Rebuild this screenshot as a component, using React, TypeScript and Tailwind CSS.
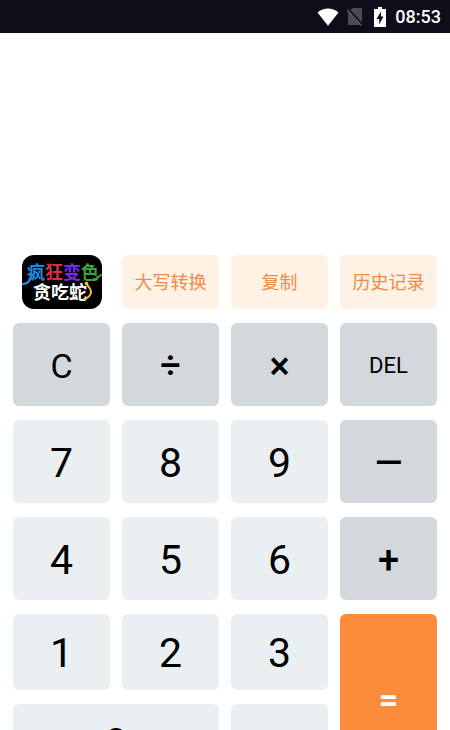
import { clsx } from 'clsx'

const actions = ['大写转换', '复制', '历史记录']

const keys = [
  { label: 'C', name: 'Clear', className: 'bg-[#d3d8dc] text-[34px]' },
  { label: '÷', name: 'Divide', className: 'bg-[#d3d8dc] text-[36px] font-medium' },
  { label: '×', name: 'Multiply', className: 'bg-[#d3d8dc] text-[38px] font-medium' },
  { label: 'DEL', name: 'Delete', className: 'bg-[#d3d8dc] text-[22px]' },
  { label: '7', className: 'bg-[#eaeff2] text-[41px]' },
  { label: '8', className: 'bg-[#eaeff2] text-[41px]' },
  { label: '9', className: 'bg-[#eaeff2] text-[41px]' },
  { label: '—', name: 'Subtract', className: 'bg-[#d3d8dc] text-[36px] font-medium' },
  { label: '4', className: 'bg-[#eaeff2] text-[41px]' },
  { label: '5', className: 'bg-[#eaeff2] text-[41px]' },
  { label: '6', className: 'bg-[#eaeff2] text-[41px]' },
  { label: '+', name: 'Add', className: 'bg-[#d3d8dc] text-[38px] font-medium' },
  { label: '1', className: 'bg-[#eaeff2] text-[41px]' },
  { label: '2', className: 'bg-[#eaeff2] text-[41px]' },
  { label: '3', className: 'bg-[#eaeff2] text-[41px]' },
  { label: '=', name: 'Equals', className: 'row-span-2 bg-[#fd8b3c] text-[34px] font-bold text-white' },
  { label: '0', className: 'col-span-2 bg-[#eaeff2] text-[41px]' },
  { label: '.', className: 'bg-[#eaeff2] text-[41px]' }
]

function StatusBar() {
  return (
    <header className="flex h-[33px] shrink-0 items-center justify-end bg-[#0d0e1a] pr-[9px] text-white">
      <svg width="22" height="18" viewBox="0 0 22 18" className="mr-2" aria-hidden="true">
        <path d="M0.5 4.5C6.5-.8 15.5-.8 21.5 4.5L11 17.8Z" fill="#fff" />
      </svg>
      <svg width="16" height="19" viewBox="0 0 16 19" className="mr-[11px]" aria-hidden="true">
        <path d="M5.5 1H15V18H1V5.5Z" fill="#4a4b56" />
        <path d="M0 1.5L16 18.5" stroke="#0d0e1a" strokeWidth="2.6" />
        <path d="M0 2.8L14.5 18.5" stroke="#5c5d67" strokeWidth="1.3" />
      </svg>
      <svg width="12" height="20" viewBox="0 0 12 20" className="mr-[9px]" aria-hidden="true">
        <path d="M4 0H8V2H12V20H0V2H4Z" fill="#fff" />
        <path d="M7 4.5L2.5 12H5.2V17.5L9.5 9.5H7Z" fill="#0d0e1a" />
      </svg>
      <span className="text-[18px] leading-5 font-medium">08:53</span>
    </header>
  )
}

function Logo() {
  return (
    <svg viewBox="0 0 80 54" className="mx-auto h-[54px] w-20" role="img" aria-label="疯狂变色贪吃蛇">
      <rect width="80" height="54" rx="12" fill="#000" />
      <path d="M1 29C5 29 8 27 10 20" fill="none" stroke="#2a83dc" strokeWidth="2.4" strokeLinecap="round" />
      <path d="M72 24C75 25 76 21 79 20" fill="none" stroke="#35983f" strokeWidth="2.2" strokeLinecap="round" />
      <g fontFamily="'Noto Sans CJK SC', sans-serif" fontWeight="700">
        <text x="5" y="24" fontSize="18">
          <tspan fill="#2585df">疯</tspan>
          <tspan fill="#e02a3d">狂</tspan>
          <tspan fill="#762be2">变</tspan>
          <tspan fill="#36a33c">色</tspan>
        </text>
        <text x="11" y="44" fontSize="18" fill="#fff">贪吃蛇</text>
      </g>
      <path d="M64 28.500C66 31 69.500 34 69 38C68 41 66 43 62 44" fill="none" stroke="#f4bd42" strokeWidth="2" strokeLinecap="round" />
      <circle cx="64.500" cy="28.500" r="1.800" fill="#f4bd42" />
    </svg>
  )
}

export default function App() {
  return (
    <div className="flex h-screen flex-col overflow-hidden bg-white font-[Roboto,'Noto_Sans_CJK_SC',sans-serif]">
      <StatusBar />
      <output className="block h-[222px] shrink-0" aria-label="Result" />
      <main className="flex shrink-0 flex-col gap-[14px] px-[13px]">
        <div className="grid grid-cols-4 gap-3">
          <Logo />
          {actions.map((action) => (
            <button key={action} className="h-[54px] rounded-md bg-[#fff2e4] text-[18px] text-[#ee8a4a]">
              {action}
            </button>
          ))}
        </div>
        <div className="grid grid-cols-4 grid-rows-[83px_83px_83px_76px_76px] gap-x-3 gap-y-[14px]">
          {keys.map((key) => (
            <button
              key={key.label}
              aria-label={key.name}
              className={clsx('flex items-center justify-center rounded-md pt-[3px] leading-none text-black', key.className)}
            >
              {key.label}
            </button>
          ))}
        </div>
      </main>
    </div>
  )
}
